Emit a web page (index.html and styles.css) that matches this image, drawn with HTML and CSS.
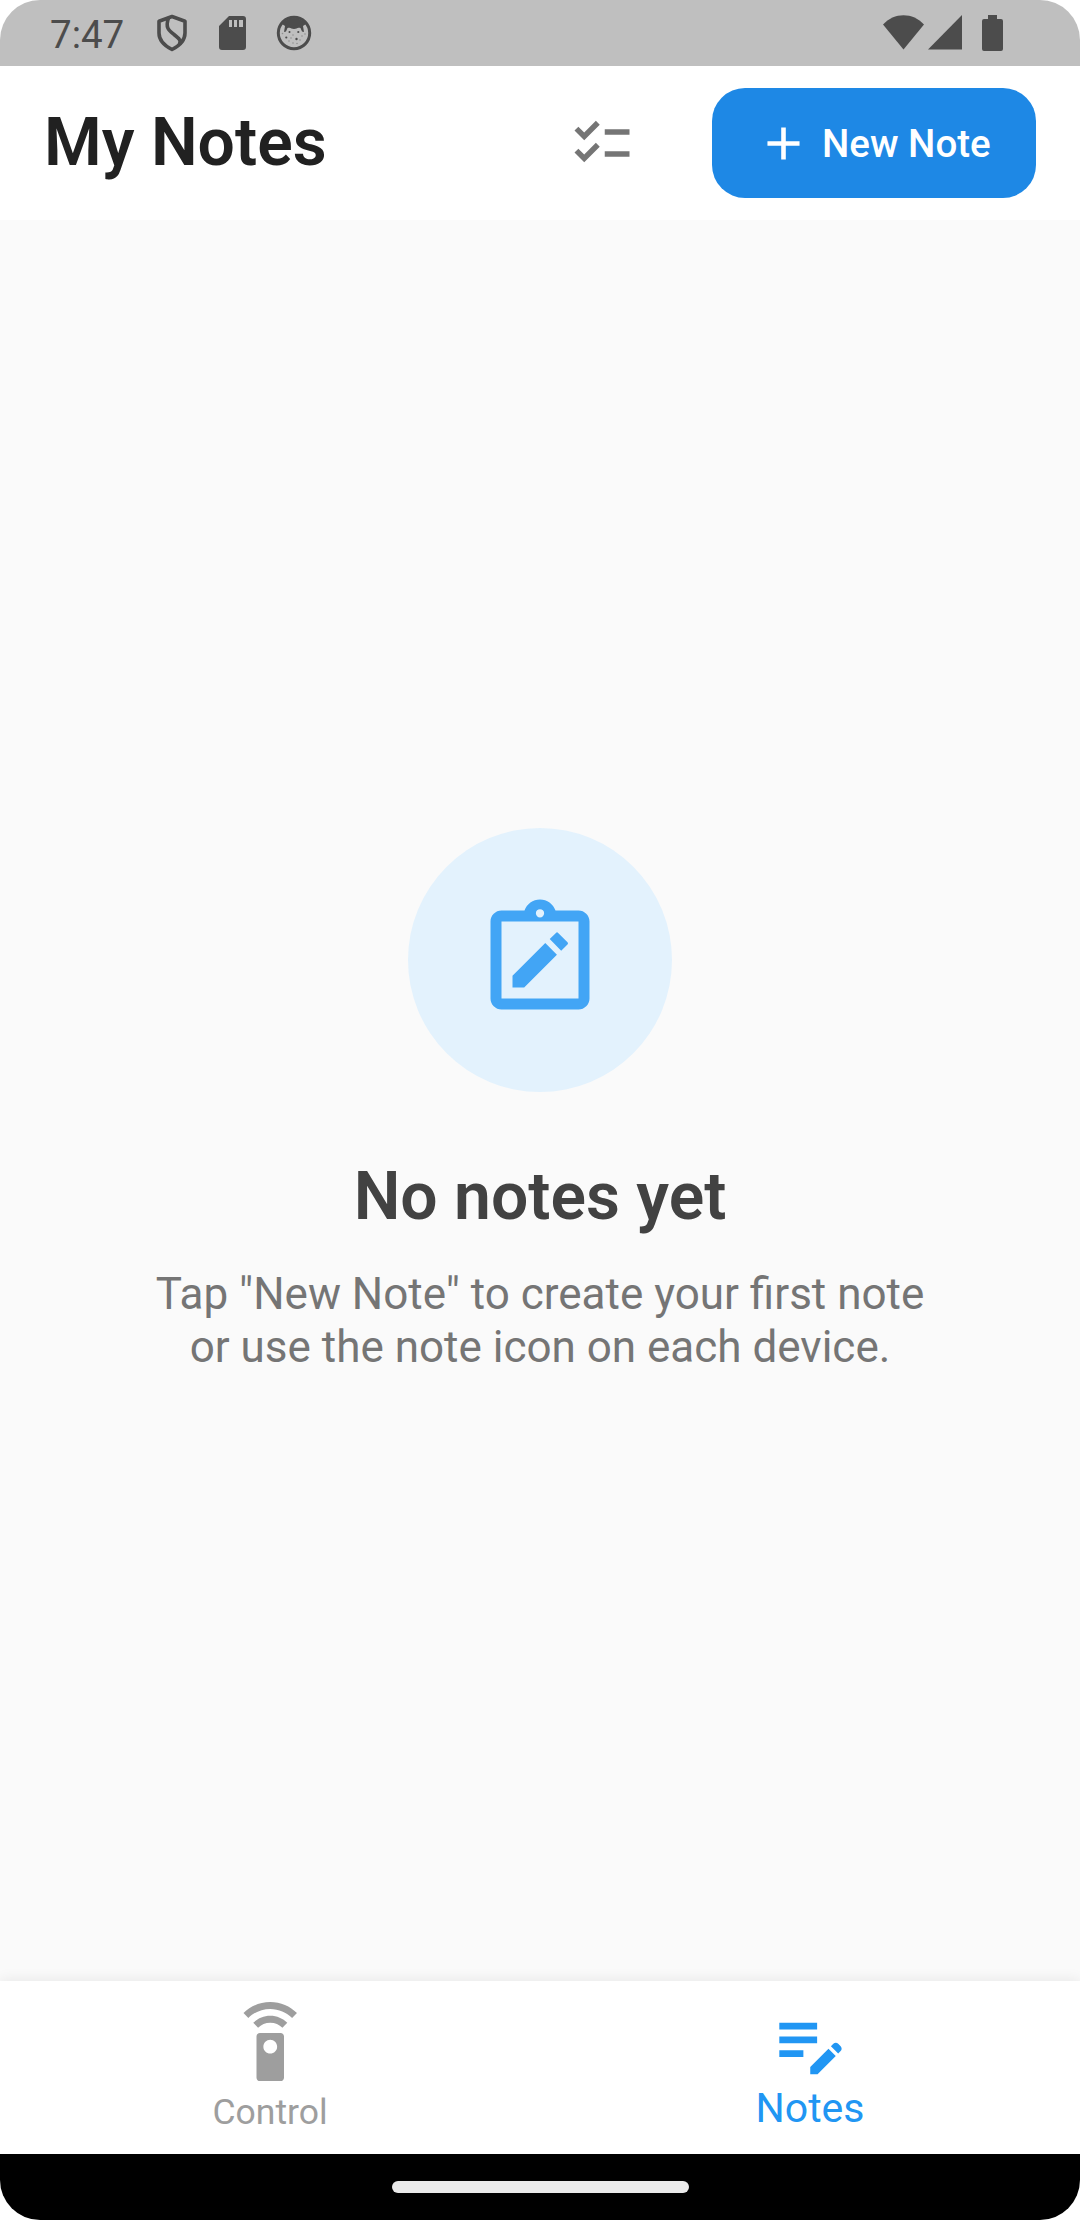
FILE: index.html
```html
<!DOCTYPE html>
<html lang="en">
<head>
<meta charset="utf-8">
<title>My Notes</title>
<link rel="stylesheet" href="styles.css">
</head>
<body>
<div class="screen">
  <div class="status-bar">
    <div class="status-left">
      <span class="clock">7:47</span>
      <svg class="shield" viewBox="0 0 32 38"><path d="M16 2.500 29 7.200V19C29 26 23 32 16 35.500 9 32 3 26 3 19V7.200Z" fill="none" stroke="currentColor" stroke-width="3.600" stroke-linejoin="round"/><path d="M12.500 4C9 14 13 16.500 18 20.500S25.500 26.500 23.500 30" fill="none" stroke="currentColor" stroke-width="3.600"/></svg>
      <svg class="sd-card" viewBox="0 0 27 34"><path fill="currentColor" fill-rule="evenodd" d="M10 0H24Q27 0 27 3V31Q27 34 24 34H3Q0 34 0 31V10ZM10 4V11H13V4ZM15 4V11H18V4ZM20 4V11H24V4Z"/></svg>
      <svg class="face" viewBox="0 0 36 36"><circle cx="18" cy="18" r="15.700" fill="none" stroke="currentColor" stroke-width="3"/><path fill="currentColor" d="M6 9C12 1 24 1 30 9L27 11 28 17 26 16.500 24.500 13C21 12 21 14 18 14S15 12 11.500 13L10 16.500 8 17 9 11Z"/><g fill="currentColor"><circle cx="13.500" cy="17" r="1"/><circle cx="22.300" cy="17" r="1.100"/><circle cx="10.300" cy="22.500" r="1.100"/><circle cx="20.500" cy="24" r="1.200"/></g><g fill="currentColor" opacity=".4"><circle cx="17" cy="20" r=".8"/><circle cx="15" cy="23" r=".8"/><circle cx="26" cy="21" r=".8"/><circle cx="24" cy="25" r=".8"/><circle cx="17" cy="28" r=".8"/><circle cx="13" cy="26" r=".8"/><circle cx="6.500" cy="18.500" r=".8"/><circle cx="29" cy="19" r=".8"/><circle cx="21" cy="28.500" r=".8"/></g></svg>
    </div>
    <div class="status-right">
      <svg class="wifi" viewBox="0 0 41 35"><path fill="currentColor" d="M0 9.500C11-3 30-3 41 9.500L20.500 34.500Z"/></svg>
      <svg class="signal" viewBox="0 0 34 35"><path fill="currentColor" d="M34 0V34.500H0Z"/></svg>
      <svg class="battery" viewBox="0 0 21 36"><path fill="currentColor" d="M6 0H15V4H19Q21 4 21 6V34Q21 36 19 36H2Q0 36 0 34V6Q0 4 2 4H6Z"/></svg>
    </div>
  </div>
  <header class="app-bar">
    <h1 class="title">My Notes</h1>
    <svg class="checklist" viewBox="0 0 24 24"><path fill="currentColor" d="M22 7h-9v2h9V7zm0 8h-9v2h9v-2zM5.540 11 2 7.460l1.410-1.410 2.120 2.120 4.240-4.240 1.410 1.410L5.540 11zm0 8L2 15.460l1.410-1.410 2.120 2.120 4.240-4.240 1.410 1.410L5.540 19z"/></svg>
    <button class="new-note"><svg class="plus" viewBox="0 0 24 24"><path fill="currentColor" d="M19 13h-6v6h-2v-6H5v-2h6V5h2v6h6v2z"/></svg><span>New Note</span></button>
  </header>
  <main class="empty">
    <div class="badge">
      <svg class="clipboard" viewBox="0 0 24 24"><path fill="currentColor" fill-rule="evenodd" d="M19 3h-4.180C14.400 1.840 13.300 1 12 1s-2.400.84-2.820 2H5c-1.100 0-2 .9-2 2v14c0 1.100.9 2 2 2h14c1.100 0 2-.9 2-2V5c0-1.100-.9-2-2-2zm-7-.25a.75.75 0 1 1 0 1.500.75.75 0 0 1 0-1.500zM5 5h14v14H5z"/><path fill="currentColor" d="M12.960 8.920 15.080 11.040 9.120 17H7v-2.120zM13.770 8.200l1.130-1.130q.2-.2.400 0l1.700 1.700q.2.200 0 .4l-1.150 1.150z"/></svg>
    </div>
    <h2 class="empty-title">No notes yet</h2>
    <p class="empty-text">Tap "New Note" to create your first note<br>or use the note icon on each device.</p>
  </main>
  <nav class="tabs">
    <div class="tab">
      <svg class="tab-icon" viewBox="0 0 24 24"><path fill="currentColor" d="M15 9H9c-.55 0-1 .45-1 1v12c0 .55.45 1 1 1h6c.55 0 1-.45 1-1V10c0-.55-.45-1-1-1zm-3 6c-1.100 0-2-.9-2-2s.9-2 2-2 2 .9 2 2-.9 2-2 2zM7.050 6.050l1.410 1.410C9.370 6.560 10.620 6 12 6s2.630.56 3.540 1.460l1.410-1.410C15.680 4.780 13.930 4 12 4s-3.680.78-4.950 2.050zM12 0C8.960 0 6.210 1.230 4.220 3.220l1.410 1.410C7.260 3.010 9.510 2 12 2s4.740 1.010 6.360 2.640l1.410-1.410C17.790 1.230 15.040 0 12 0z"/></svg>
      <span class="tab-label">Control</span>
    </div>
    <div class="tab active">
      <svg class="tab-icon" viewBox="0 0 24 24"><path fill="currentColor" d="M3 10h11v2H3v-2zm0-2h11V6H3v2zm0 8h7v-2H3v2zm15.010-3.130l.71-.71c.39-.39 1.020-.39 1.410 0l.71.71c.39.39.39 1.020 0 1.410l-.71.71-2.120-2.120zm-.71.71l-5.300 5.300V21h2.120l5.300-5.300-2.120-2.120z"/></svg>
      <span class="tab-label">Notes</span>
    </div>
  </nav>
  <div class="system-bar"><div class="handle"></div></div>
</div>
</body>
</html>
```
FILE: styles.css
```css
* { box-sizing: border-box; }
body { margin: 0; background: #fff; font-family: Roboto, sans-serif; }
h1, h2, p { margin: 0; }
svg { display: block; flex: none; }
.screen {
  width: 1080px;
  height: 2220px;
  display: flex;
  flex-direction: column;
  border-radius: 40px;
  overflow: hidden;
  background: #fff;
}
.status-bar {
  height: 66px;
  flex: none;
  display: flex;
  justify-content: space-between;
  padding: 0 77px 0 50px;
  background: #bfbfbf;
  color: #4c4c4c;
}
.status-left, .status-right { display: flex; align-items: flex-start; }
.clock { width: 106px; padding-top: 12px; font-size: 38.5px; line-height: 45px; }
.shield { width: 32px; height: 38px; margin-top: 14px; }
.sd-card { width: 27px; height: 34px; margin: 16px 0 0 31px; }
.face { width: 36px; height: 36px; margin: 15px 0 0 29.5px; }
.wifi { width: 41px; height: 35px; margin-top: 15px; }
.signal { width: 34px; height: 35px; margin: 15px 0 0 4px; }
.battery { width: 21px; height: 36px; margin: 15px 0 0 20px; }
.app-bar {
  height: 154px;
  flex: none;
  display: flex;
  align-items: center;
  padding: 0 44px;
}
.title { flex: 1; padding-bottom: 2px; font-size: 66px; line-height: 77px; font-weight: 600; color: #212121; }
.checklist { width: 66px; height: 66px; margin-right: 77px; color: #757575; }
.new-note {
  width: 324px;
  height: 110px;
  display: flex;
  align-items: center;
  gap: 11px;
  padding: 0 0 0 44px;
  border: 0;
  border-radius: 33px;
  background: #1e88e5;
  color: #fff;
  font: 500 38.5px/45px Roboto, sans-serif;
  white-space: nowrap;
}
.plus { width: 55px; height: 55px; }
.empty {
  flex: 1;
  display: flex;
  flex-direction: column;
  align-items: center;
  justify-content: center;
  background: #fafafa;
  text-align: center;
}
.badge {
  width: 264px;
  height: 264px;
  display: flex;
  align-items: center;
  justify-content: center;
  border-radius: 50%;
  background: #e3f2fd;
  color: #42a5f5;
}
.clipboard { width: 132px; height: 132px; }
.empty-title { margin-top: 66px; font-size: 66px; line-height: 77px; font-weight: 600; color: #424242; }
.empty-text { margin-top: 33px; font-size: 44px; line-height: 52.7px; color: #757575; }
.tabs {
  height: 173px;
  flex: none;
  display: flex;
  background: #fff;
  box-shadow: 0 0 14px rgba(0, 0, 0, .09);
}
.tab {
  flex: 1;
  display: flex;
  flex-direction: column;
  align-items: center;
  padding-top: 20.5px;
  color: #9e9e9e;
}
.tab-icon { width: 82.5px; height: 82.5px; }
.tab-label { margin-top: 7px; font-size: 35.5px; line-height: 42px; }
.active { color: #2196f3; }
.active .tab-label { margin-top: 1px; font-size: 41px; line-height: 46px; }
.system-bar {
  height: 66px;
  flex: none;
  display: flex;
  align-items: center;
  justify-content: center;
  background: #000;
}
.handle { width: 297px; height: 12px; border-radius: 6px; background: #eaeaea; }
```
